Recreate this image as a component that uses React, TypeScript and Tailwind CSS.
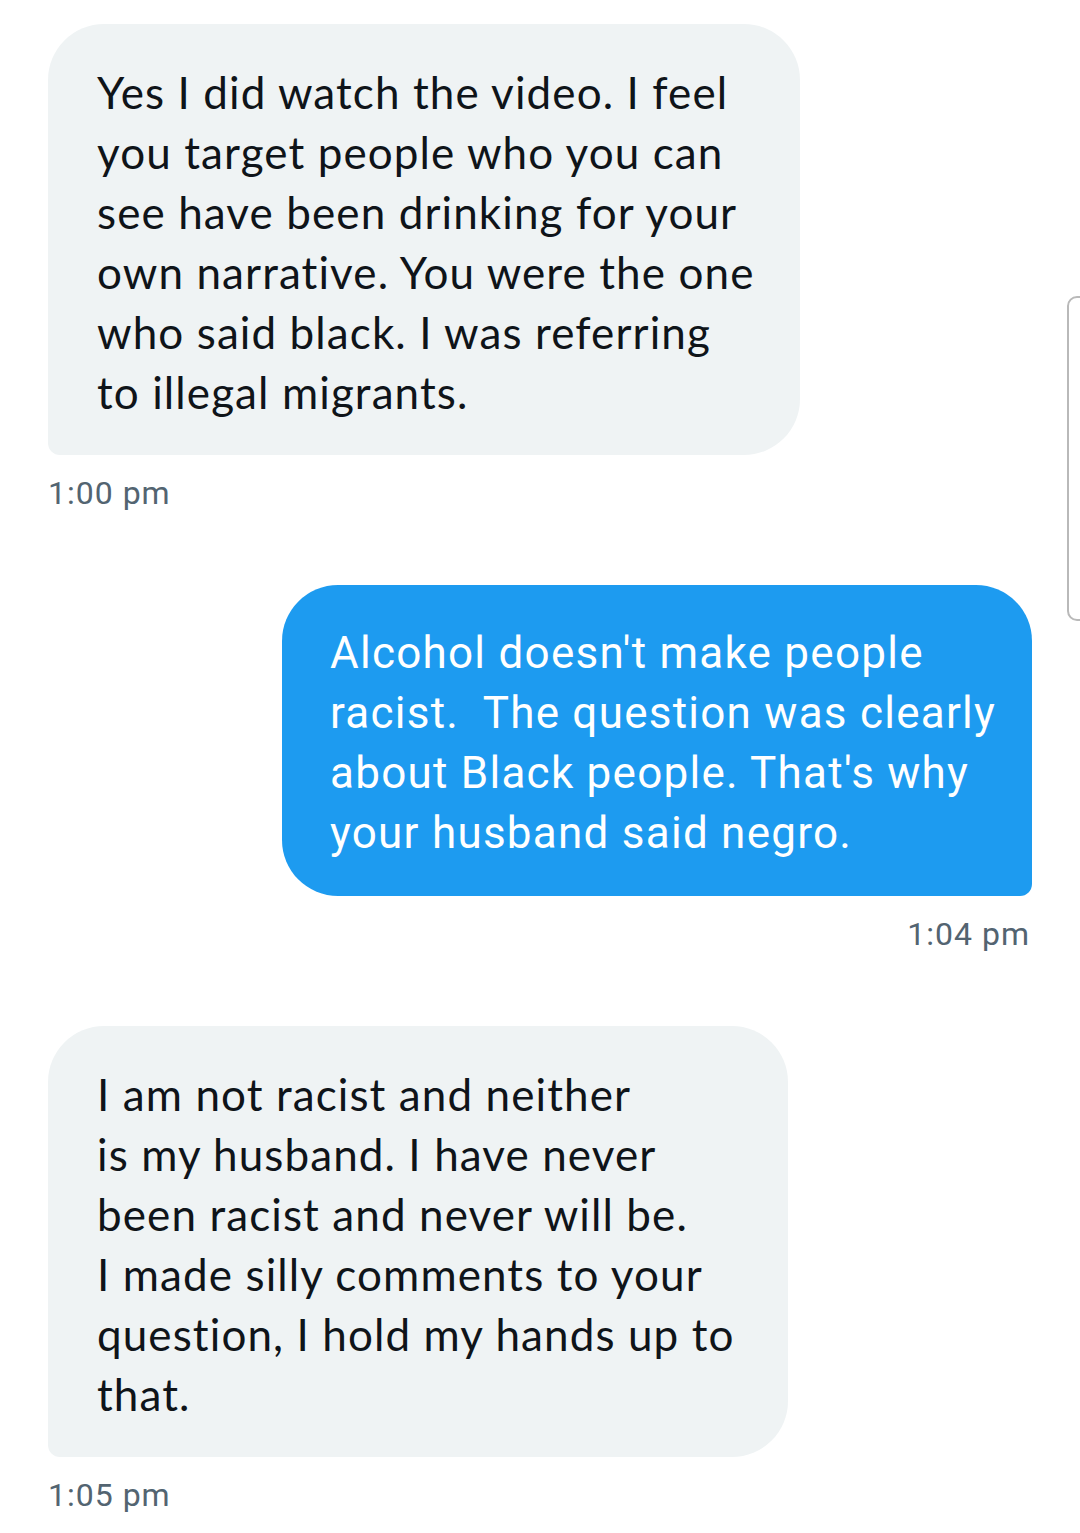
import React from 'react'

type Msg = {
  lines: string[]
  time: string
  mine?: boolean
  width: string
}

const MESSAGES: Msg[] = [
  {
    lines: [
      'Yes I did watch the video. I feel',
      'you target people who you can',
      'see have been drinking for your',
      'own narrative. You were the one',
      'who said black. I was referring',
      'to illegal migrants.',
    ],
    time: '1:00 pm',
    width: 'w-[752px]',
  },
  {
    lines: [
      "Alcohol doesn't make people",
      'racist.\u00a0 The question was clearly',
      "about Black people. That's why",
      'your husband said negro.',
    ],
    time: '1:04 pm',
    mine: true,
    width: 'w-[750px]',
  },
  {
    lines: [
      'I am not racist and neither',
      'is my husband. I have never',
      'been racist and never will be.',
      'I made silly comments to your',
      'question, I hold my hands up to',
      'that.',
    ],
    time: '1:05 pm',
    width: 'w-[740px]',
  },
]

function Bubble({ msg }: { msg: Msg }) {
  return (
    <div className={`flex flex-col ${msg.mine ? 'items-end' : 'items-start'}`}>
      <div
        className={`${msg.width} pt-[38px] pb-[33px] rounded-[56px] [font-variant-ligatures:none] ${
          msg.mine
            ? 'pl-[48px] pr-[20px] bg-[#1d9bf0] text-white rounded-br-[12px] font-["Roboto",sans-serif] tracking-[1.25px]'
            : 'pl-[49px] pr-[20px] bg-[#eff3f4] text-[#0f1419] rounded-bl-[12px] font-["Lato",sans-serif] tracking-[1.1px]'
        }`}
      >
        {msg.lines.map((line, i) => (
          <div key={i} className="text-[44px] leading-[60px] whitespace-nowrap">
            {line}
          </div>
        ))}
      </div>
      <div
        className={`mt-[18px] text-[32px] leading-[40px] text-[#536471] font-["Roboto",sans-serif] tracking-[1px] ${
          msg.mine ? 'pr-[2px]' : ''
        }`}
      >
        {msg.time}
      </div>
    </div>
  )
}

export default function App() {
  return (
    <div className="relative w-[1080px] h-[1533px] bg-white overflow-hidden">
      <div className="flex flex-col gap-[72px] pt-[24px] pl-[48px] pr-[48px]">
        {MESSAGES.map((m, i) => (
          <Bubble key={i} msg={m} />
        ))}
      </div>
      {/* scroll handle at the right edge */}
      <div className="absolute left-[1067px] top-[296px] w-[30px] h-[325px] rounded-[10px] border-2 border-[#b9b9b9] bg-white" />
    </div>
  )
}
